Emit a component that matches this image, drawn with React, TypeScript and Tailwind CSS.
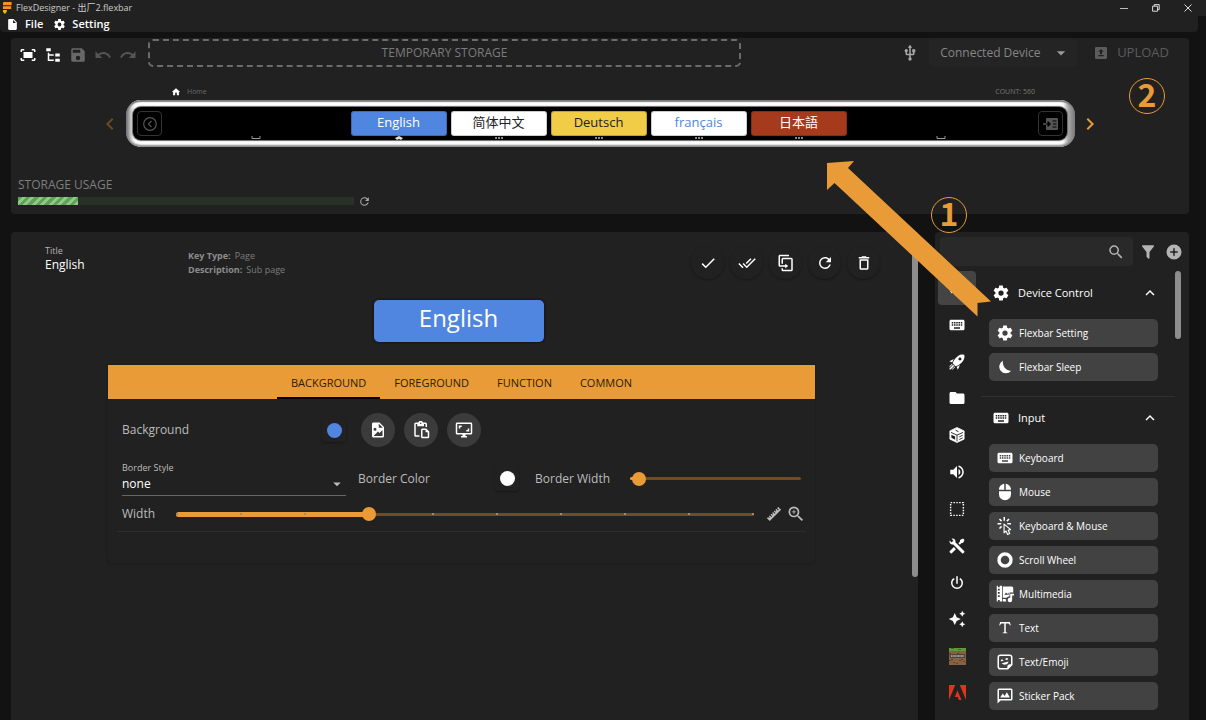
import React, { useState } from "react";

const P = {
  file: "M13,9V3.5L18.5,9M6,2C4.89,2 4,2.89 4,4V20A2,2 0 0,0 6,22H18A2,2 0 0,0 20,20V8L14,2H6Z",
  cog: "M12,15.5A3.5,3.5 0 0,1 8.5,12A3.5,3.5 0 0,1 12,8.5A3.5,3.5 0 0,1 15.5,12A3.5,3.5 0 0,1 12,15.5M19.43,12.97C19.47,12.65 19.5,12.33 19.5,12C19.5,11.67 19.47,11.34 19.43,11L21.54,9.37C21.73,9.22 21.78,8.95 21.66,8.73L19.66,5.27C19.54,5.05 19.27,4.96 19.05,5.05L16.56,6.05C16.04,5.66 15.5,5.32 14.87,5.07L14.5,2.42C14.46,2.18 14.25,2 14,2H10C9.75,2 9.54,2.18 9.5,2.42L9.13,5.07C8.5,5.32 7.96,5.66 7.44,6.05L4.95,5.05C4.73,4.96 4.46,5.05 4.34,5.27L2.34,8.73C2.21,8.95 2.27,9.22 2.46,9.37L4.57,11C4.53,11.34 4.5,11.67 4.5,12C4.5,12.33 4.53,12.65 4.57,12.97L2.46,14.63C2.27,14.78 2.21,15.05 2.34,15.27L4.34,18.73C4.46,18.95 4.73,19.03 4.95,18.95L7.44,17.94C7.96,18.34 8.5,18.68 9.13,18.93L9.5,21.58C9.54,21.82 9.75,22 10,22H14C14.25,22 14.46,21.82 14.5,21.58L14.87,18.93C15.5,18.67 16.04,18.34 16.56,17.94L19.05,18.95C19.27,19.03 19.54,18.95 19.66,18.73L21.66,15.27C21.78,15.05 21.73,14.78 21.54,14.63L19.43,12.97Z",
  fit: "M17 4H20C21.1 4 22 4.9 22 6V8H20V6H17V4M4 8V6H7V4H4C2.9 4 2 4.9 2 6V8H4M20 16V18H17V20H20C21.1 20 22 19.1 22 18V16H20M7 18H4V16H2V18C2 19.1 2.9 20 4 20H7V18M18 8H6V16H18V8Z",
  tree: "M3,3H9V7H3V3M15,10H21V14H15V10M15,17H21V21H15V17M13,13H7V18H13V20H7L5,20V9H7V11H13V13Z",
  save: "M15,9H5V5H15M12,19A3,3 0 0,1 9,16A3,3 0 0,1 12,13A3,3 0 0,1 15,16A3,3 0 0,1 12,19M17,3H5C3.89,3 3,3.9 3,5V19A2,2 0 0,0 5,21H19A2,2 0 0,0 21,19V7L17,3Z",
  undo: "M12.5,8C9.85,8 7.45,9 5.6,10.6L2,7V16H11L7.38,12.38C8.77,11.22 10.54,10.5 12.5,10.5C16.04,10.5 19.05,12.81 20.1,16L22.47,15.22C21.08,11.03 17.15,8 12.5,8Z",
  redo: "M18.4,10.6C16.55,9 14.15,8 11.5,8C6.85,8 2.92,11.03 1.54,15.22L3.9,16C4.95,12.81 7.95,10.5 11.5,10.5C13.45,10.5 15.23,11.22 16.62,12.38L13,16H22V7L18.4,10.6Z",
  usb: "M15,7V11H16V13H13V5H15L12,1L9,5H11V13H8V10.93C8.7,10.56 9.2,9.85 9.2,9C9.2,7.78 8.21,6.8 7,6.8C5.78,6.8 4.8,7.78 4.8,9C4.8,9.85 5.3,10.56 6,10.93V13A2,2 0 0,0 8,15H11V18.05C10.29,18.41 9.8,19.15 9.8,20A2.2,2.2 0 0,0 12,22.2A2.2,2.2 0 0,0 14.2,20C14.2,19.15 13.71,18.41 13,18.05V15H16A2,2 0 0,0 18,13V11H19V7H15Z",
  menuDown: "M7,10L12,15L17,10H7Z",
  upload: "M5,3H19A2,2 0 0,1 21,5V19A2,2 0 0,1 19,21H5A2,2 0 0,1 3,19V5A2,2 0 0,1 5,3M8,17H16V15H8V17M16,10L12,6L8,10H10.5V14H13.5V10H16Z",
  home: "M10,20V14H14V20H19V12H22L12,3L2,12H5V20H10Z",
  left: "M15.41,16.58L10.83,12L15.41,7.41L14,6L8,12L14,18L15.41,16.58Z",
  right: "M8.59,16.58L13.17,12L8.59,7.41L10,6L16,12L10,18L8.59,16.58Z",
  up: "M7.41,15.41L12,10.83L16.59,15.41L18,14L12,8L6,14L7.41,15.41Z",
  refresh: "M17.65,6.35C16.2,4.9 14.21,4 12,4A8,8 0 0,0 4,12A8,8 0 0,0 12,20C15.73,20 18.84,17.45 19.73,14H17.65C16.83,16.33 14.61,18 12,18A6,6 0 0,1 6,12A6,6 0 0,1 12,6C13.66,6 15.14,6.69 16.22,7.78L13,11H20V4L17.65,6.35Z",
  check: "M21,7L9,19L3.5,13.5L4.91,12.09L9,16.17L19.59,5.59L21,7Z",
  checkAll: "M0.41,13.41L6,19L7.41,17.58L1.83,12M22.24,5.58L11.66,16.17L7.5,12L6.07,13.41L11.66,19L23.66,7M18,7L16.59,5.58L10.24,11.93L11.66,13.34L18,7Z",
  duplicate: "M11,17H4A2,2 0 0,1 2,15V3A2,2 0 0,1 4,1H16V3H4V15H11V13L15,16L11,19V17M19,21V7H8V13H6V7A2,2 0 0,1 8,5H19A2,2 0 0,1 21,7V21A2,2 0 0,1 19,23H8A2,2 0 0,1 6,21V19H8V21H19Z",
  trash: "M6,19A2,2 0 0,0 8,21H16A2,2 0 0,0 18,19V7H6V19M8,9H16V19H8V9M15.5,4L14.5,3H9.5L8.5,4H5V6H19V4H15.5Z",
  fileImage: "M13,9H18.5L13,3.5V9M6,2H14L20,8V20A2,2 0 0,1 18,22H6C4.89,22 4,21.1 4,20V4C4,2.89 4.89,2 6,2M6,20H15L18,20V12L14,16L12,14L6,20M8,9A2,2 0 0,0 6,11A2,2 0 0,0 8,13A2,2 0 0,0 10,11A2,2 0 0,0 8,9Z",
  paste: "M18,2H14.82C14.4,0.84 13.3,0 12,0H11C9.7,0 8.6,0.84 8.18,2H5A2,2 0 0,0 3,4V19A2,2 0 0,0 5,21H10V19H5V4H7V7H16V4H18V8H20V4A2,2 0 0,0 18,2M11.5,2A1,1 0 0,1 12.5,3A1,1 0 0,1 11.5,4A1,1 0 0,1 10.5,3A1,1 0 0,1 11.5,2M14,10A2,2 0 0,0 12,12V21A2,2 0 0,0 14,23H21A2,2 0 0,0 23,21V14L19,10H14M14,12H18V15H21V21H14V12Z",
  monitor: "M9,6H5V10H7V8H9M19,10H17V12H15V14H19M21,16H3V4H21M21,2H3C1.89,2 1,2.89 1,4V16A2,2 0 0,0 3,18H10V20H8V22H16V20H14V18H21A2,2 0 0,0 23,16V4C23,2.89 22.1,2 21,2",
  ruler: "M1.39,18.36L3.16,16.6L4.58,18L5.64,16.95L4.22,15.54L5.64,14.12L8.11,16.6L9.17,15.54L6.7,13.06L8.11,11.65L9.53,13.06L10.59,12L9.17,10.59L10.59,9.17L13.06,11.65L14.12,10.59L11.65,8.11L13.06,6.7L14.47,8.11L15.54,7.05L14.12,5.64L15.54,4.22L18,6.7L19.07,5.64L16.6,3.16L18.36,1.39L22.61,5.64L5.64,22.61L1.39,18.36Z",
  zoom: "M15.5,14L20.5,19L19,20.5L14,15.5V14.71L13.73,14.43C12.59,15.41 11.11,16 9.5,16A6.5,6.5 0 0,1 3,9.5A6.5,6.5 0 0,1 9.5,3A6.5,6.5 0 0,1 16,9.5C16,11.11 15.41,12.59 14.43,13.73L14.71,14H15.5M9.5,14C12,14 14,12 14,9.5C14,7 12,5 9.5,5C7,5 5,7 5,9.5C5,12 7,14 9.5,14M12,10H10V12H9V10H7V9H9V7H10V9H12V10Z",
  search: "M9.5,3A6.5,6.5 0 0,1 16,9.5C16,11.11 15.41,12.59 14.44,13.73L14.71,14H15.5L20.5,19L19,20.5L14,15.5V14.71L13.73,14.44C12.59,15.41 11.11,16 9.5,16A6.5,6.5 0 0,1 3,9.5A6.5,6.5 0 0,1 9.5,3M9.5,5C7,5 5,7 5,9.5C5,12 7,14 9.5,14C12,14 14,12 14,9.5C14,7 12,5 9.5,5Z",
  filter: "M14,12V19.88C14.04,20.18 13.94,20.5 13.71,20.71C13.32,21.1 12.69,21.1 12.3,20.71L10.29,18.7C10.06,18.47 9.96,18.16 10,17.87V12H9.97L4.21,4.62C3.87,4.19 3.95,3.56 4.38,3.22C4.57,3.08 4.78,3 5,3V3H19V3C19.22,3 19.43,3.08 19.62,3.22C20.05,3.56 20.13,4.19 19.79,4.62L14.03,12H14Z",
  plus: "M17,13H13V17H11V13H7V11H11V7H13V11H17M12,2A10,10 0 0,0 2,12A10,10 0 0,0 12,22A10,10 0 0,0 22,12A10,10 0 0,0 12,2Z",
  keyboard: "M19,10H17V8H19M19,13H17V11H19M16,10H14V8H16M16,13H14V11H16M16,17H8V15H16M7,10H5V8H7M7,13H5V11H7M8,11H10V13H8M8,8H10V10H8M11,11H13V13H11M11,8H13V10H11M20,5H4C2.89,5 2,5.89 2,7V17A2,2 0 0,0 4,19H20A2,2 0 0,0 22,17V7C22,5.89 21.1,5 20,5Z",
  rocket: "M13.13 22.19L11.5 18.36C13.07 17.78 14.54 17 15.9 16.09L13.13 22.19M5.64 12.5L1.81 10.87L7.91 8.1C7 9.46 6.22 10.93 5.64 12.5M21.61 2.39C21.61 2.39 16.66 .269 11 5.93C8.81 8.12 7.5 10.53 6.65 12.64C6.37 13.39 6.56 14.21 7.11 14.77L9.24 16.89C9.79 17.45 10.61 17.63 11.36 17.35C13.5 16.53 15.88 15.19 18.07 13C23.73 7.34 21.61 2.39 21.61 2.39M14.54 9.46C13.76 8.68 13.76 7.41 14.54 6.63S16.59 5.85 17.37 6.63C18.14 7.41 18.15 8.68 17.37 9.46C16.59 10.24 15.32 10.24 14.54 9.46M8.88 16.53L7.47 15.12L8.88 16.53M6.24 22L9.88 18.36C9.54 18.27 9.21 18.12 8.91 17.91L4.83 22H6.24M2 22H3.41L8.18 17.24L6.76 15.83L2 20.59V22M2 19.17L6.09 15.09C5.88 14.79 5.73 14.47 5.64 14.12L2 17.76V19.17Z",
  folder: "M10,4H4C2.89,4 2,4.89 2,6V18A2,2 0 0,0 4,20H20A2,2 0 0,0 22,18V8C22,6.89 21.1,6 20,6H12L10,4Z",
  volume: "M14,3.23V5.29C16.89,6.15 19,8.83 19,12C19,15.17 16.89,17.84 14,18.7V20.77C18,19.86 21,16.28 21,12C21,7.72 18,4.14 14,3.23M16.5,12C16.5,10.23 15.5,8.71 14,7.97V16C15.5,15.29 16.5,13.76 16.5,12M3,9V15H7L12,20V4L7,9H3Z",
  tools: "M21.71 20.29L20.29 21.71A1 1 0 0 1 18.88 21.71L7 9.85A3.81 3.81 0 0 1 6 10A4 4 0 0 1 2.22 4.7L4.76 7.24L5.29 6.71L6.71 5.29L7.24 4.76L4.7 2.22A4 4 0 0 1 10 6A3.81 3.81 0 0 1 9.85 7L21.71 18.88A1 1 0 0 1 21.71 20.29M2.29 18.88A1 1 0 0 0 2.29 20.29L3.71 21.71A1 1 0 0 0 5.12 21.71L10.59 16.25L7.76 13.42M20 2L16 4V6L13.83 8.17L15.83 10.17L18 8H20L22 4Z",
  power: "M16.56,5.44L15.11,6.89C16.84,7.94 18,9.83 18,12A6,6 0 0,1 12,18A6,6 0 0,1 6,12C6,9.83 7.16,7.94 8.88,6.88L7.44,5.44C5.36,6.88 4,9.28 4,12A8,8 0 0,0 12,20A8,8 0 0,0 20,12C20,9.28 18.64,6.88 16.56,5.44M13,3H11V13H13",
  sparkle: "M19,1L17.74,3.75L15,5L17.74,6.26L19,9L20.25,6.26L23,5L20.25,3.75M9,4L6.5,9.5L1,12L6.5,14.5L9,20L11.5,14.5L17,12L11.5,9.5M19,15L17.74,17.74L15,19L17.74,20.25L19,23L20.25,20.25L23,19L20.25,17.74",
  mouse: "M11,1.07C7.05,1.56 4,4.92 4,9H11M4,15A8,8 0 0,0 12,23A8,8 0 0,0 20,15V11H4M13,1.07V9H20C20,4.92 16.94,1.56 13,1.07Z",
  click: "M11.5,11L17.88,16.37L17,16.55L16.36,16.67C15.73,16.8 15.37,17.5 15.65,18.07L15.92,18.65L17.28,21.59L15.86,22.25L14.5,19.32L14.24,18.74C13.97,18.15 13.22,17.97 12.72,18.38L12.21,18.78L11.5,19.35V11M10.76,8.69A0.76,0.76 0 0,0 10,9.45V20.9C10,21.32 10.34,21.66 10.76,21.66C10.95,21.66 11.11,21.6 11.24,21.5L13.15,19.95L14.81,23.57C14.94,23.84 15.21,24 15.5,24C15.61,24 15.72,24 15.83,23.92L18.59,22.64C18.97,22.46 19.15,22 18.95,21.63L17.28,18L19.69,17.55C19.85,17.5 20,17.43 20.12,17.29C20.39,16.97 20.35,16.5 20,16.21L11.26,8.86L11.25,8.87C11.12,8.76 10.95,8.69 10.76,8.69M15,10V8H20V10H15M13.83,4.76L16.66,1.93L18.07,3.34L15.24,6.17L13.83,4.76M10,0H12V5H10V0M3.93,14.66L6.76,11.83L8.17,13.24L5.34,16.07L3.93,14.66M3.93,3.34L5.34,1.93L8.17,4.76L6.76,6.17L3.93,3.34M7,10H2V8H7V10",
  text: "M18.5,4L19.66,8.35L18.7,8.61C18.25,7.74 17.79,6.87 17.26,6.43C16.73,6 16.11,6 15.5,6H13V16.5C13,17 13,17.5 13.33,17.75C13.67,18 14.33,18 15,18V19H9V18C9.67,18 10.33,18 10.67,17.75C11,17.5 11,17 11,16.5V6H8.5C7.89,6 7.27,6 6.74,6.43C6.21,6.87 5.75,7.74 5.3,8.61L4.34,8.35L5.5,4H18.5Z",
  emoji: "M5.5,2C3.56,2 2,3.56 2,5.5V18.5C2,20.44 3.56,22 5.5,22H16L22,16V5.5C22,3.56 20.44,2 18.5,2H5.5M5.75,4H18.25A1.75,1.75 0 0,1 20,5.75V15H18.5C16.56,15 15,16.56 15,18.5V20H5.75A1.75,1.75 0 0,1 4,18.25V5.75A1.75,1.75 0 0,1 5.75,4M14.44,6.77C14.28,6.77 14.12,6.79 13.97,6.83C13.03,7.09 12.5,8.05 12.74,9C12.79,9.15 12.86,9.3 12.95,9.44L16.18,8.56C16.18,8.39 16.16,8.22 16.12,8.05C15.91,7.3 15.22,6.77 14.44,6.77M8.17,8.5C8,8.5 7.85,8.5 7.7,8.55C6.77,8.81 6.22,9.77 6.47,10.7C6.5,10.86 6.59,11 6.68,11.16L9.91,10.28C9.91,10.11 9.89,9.94 9.85,9.78C9.64,9 8.95,8.5 8.17,8.5M16.72,11.26L7.59,13.77C8.91,15.3 11,15.94 12.95,15.41C14.9,14.87 16.36,13.25 16.72,11.26Z",
  sticker: "M20,2H4A2,2 0 0,0 2,4V22L6,18H20A2,2 0 0,0 22,16V4A2,2 0 0,0 20,2M20,16H4V4H20V16M5.5,14L9,8.5L11.5,12L14.5,7L18.5,14H5.5Z",
  moon: "M9 2.500A10 10 0 1 0 21 18A13 13 0 0 1 9 2.500Z",
};

function Icon({ d, className = "size-[18px]" }: { d: string; className?: string }) {
  return (
    <svg viewBox="0 0 24 24" fill="currentColor" aria-hidden="true" className={`shrink-0 ${className}`}>
      <path d={d} />
    </svg>
  );
}

function CubeIcon() {
  return (
    <svg viewBox="0 0 24 24" aria-hidden="true" className="size-[18px]">
      <path d="M12 2 21.500 6.500V17.500L12 22 2.500 17.500V6.500Z" fill="#fff" stroke="#fff" strokeLinejoin="round" />
      <path d="M4 8.500 12 12.200 20 8.500M12 12.200V20.500" stroke="#212121" strokeWidth="1.200" fill="none" />
      <path d="M10 5.500 14 7.700" stroke="#212121" strokeWidth="1.200" />
      <path d="M4.500 11.500 9.500 14V18.200L4.500 15.800Z" fill="#212121" />
      <path d="M15 14.500 19.500 12.300M15 18 19.500 15.800" stroke="#212121" strokeWidth="1.200" />
    </svg>
  );
}

function SelectionIcon() {
  return (
    <svg viewBox="0 0 24 24" aria-hidden="true" className="size-[18px]">
      <rect x="3.5" y="3.5" width="17" height="17" fill="none" stroke="#fff" strokeWidth="1.9" strokeDasharray="2 1.78" />
    </svg>
  );
}

function WheelIcon() {
  return (
    <svg viewBox="0 0 24 24" aria-hidden="true" className="size-[18px] shrink-0">
      <circle cx="12" cy="12" r="8" fill="none" stroke="#fff" strokeWidth="4.6" />
      <circle cx="12" cy="12" r="10.6" fill="none" stroke="#424242" strokeWidth="0.8" strokeDasharray="1 7.3" />
    </svg>
  );
}

function MediaIcon() {
  return (
    <svg viewBox="0 0 24 24" aria-hidden="true" className="size-[18px] shrink-0">
      <path fill="#fff" d="M1 1h1.500v2H5V1h3v21H5v-2H2.500v2H1zM9 2H21a2 2 0 0 1 2 2v6h-5v5a5 5 0 0 0-4 2H9zM9 18.500h4a5 5 0 0 0 1 3.500H9z" />
      <path fill="#424242" d="M2.500 5H5v2.300H2.500zM2.500 9.300H5v2.300H2.500zM2.500 13.600H5V16H2.500zM11 13l2.500-3 2 2 1.500-2v3z" />
      <path fill="#fff" d="M19 11.500h5v2.500h-2.500v6a3 3 0 1 1-2.500-3z" />
    </svg>
  );
}

function BlockIcon() {
  const soil = [
    [0, 5], [4, 6], [8, 5], [13, 6], [2, 11], [10, 12], [14, 13], [4, 14], [7, 15], [0, 12], [12, 11],
  ];
  return (
    <svg viewBox="0 0 17 17" aria-hidden="true" className="size-[17px]">
      <rect width="17" height="17" fill="#8a6042" />
      <rect width="17" height="3" fill="#5e9a38" />
      <path d="M0 3h3v1h2v-1h4v2h2v-2h3v1h3v-1z" fill="#4a7b2c" />
      <path d="M2 0h3v1h-3zM9 1h3v1h-3z" fill="#3f6b27" />
      {soil.map(([x, y]) => (
        <rect key={`${x}-${y}`} x={x} y={y} width="2" height="1" fill="#5f402b" />
      ))}
      <rect x="1" y="6" width="15" height="4" fill="#4b4542" />
      <path d="M2 8h13" stroke="#a19d9a" strokeWidth="2" strokeDasharray="1 .4" />
    </svg>
  );
}

function AdobeIcon() {
  return (
    <svg viewBox="0 0 17 15" aria-hidden="true" className="h-[15px] w-[17px]">
      <path fill="#e2341d" d="M0 0h6.200L0 15zM10.800 0H17v15zM8.500 5.400 12.500 15H9.900l-1.200-3H5.800z" />
    </svg>
  );
}

function Logo() {
  return (
    <svg viewBox="0 0 9 12" aria-hidden="true" className="h-3 w-[9px]">
      <path fill="#f7931e" d="M.8 0H8.600V3.200H0V.8zM0 4.200H8.200V7H0z" />
      <path fill="#ffb400" d="M0 8h3.800V9.500L2 12 0 10z" />
    </svg>
  );
}

function MoveInIcon() {
  return (
    <svg viewBox="0 0 16 14" aria-hidden="true" className="h-3.5 w-4">
      <rect x="3" y="1" width="12" height="12" rx="1" fill="#555" />
      <path d="M0 7H3" stroke="#555" strokeWidth="1.500" />
      <path d="M3 7H6M5 4.500 7.500 7 5 9.500Z" fill="#000" stroke="#000" strokeWidth="1" />
      <path stroke="#000" strokeWidth="1.200" d="M9.500 4h4M10 7h3.500M9.500 10h4" />
    </svg>
  );
}

const deviceKeys = [
  { label: "English", style: "bg-[#5086e0] text-white" },
  { label: "简体中文", style: "bg-white text-[#222]" },
  { label: "Deutsch", style: "bg-[#f1cc46] text-[#222]" },
  { label: "français", style: "bg-white text-[#5086e0]" },
  { label: "日本語", style: "bg-[#a63a1c] text-white" },
];

function SlotMark() {
  return (
    <svg viewBox="0 0 10 4" aria-hidden="true" className="h-1 w-2.5">
      <path d="M1 0V2.500H9V0" fill="none" stroke="#9a9a9a" />
    </svg>
  );
}

function KeyMark({ active }: { active: boolean }) {
  return (
    <svg viewBox="0 0 10 4" aria-hidden="true" className="h-1 w-2.5">
      {active ? (
        <path d="M5 0 9 2 7 4 5 3 3 4 1 2Z" fill="#ddd" />
      ) : (
        <path d="M1 1h2v2h-2zM4 1h2v2h-2zM7 1h2v2h-2z" fill="#888" />
      )}
    </svg>
  );
}

function DeviceBar() {
  const square = "flex size-[25px] shrink-0 items-center justify-center rounded border border-[#333] mt-1";
  return (
    <div className="mt-0.5 flex items-center px-[91px]">
      <button aria-label="Previous" className="w-[24px] text-[#6b4a22]">
        <Icon d={P.left} className="size-6 -ml-1" />
      </button>
      <div className="h-[47px] min-w-0 flex-1 rounded-[15px] bg-[linear-gradient(to_right,#6a6a6a,#ddd_6px,#fff_9px,#fff_calc(100%-12px),#aaa_calc(100%-7px),#777)] p-[7px] pr-2 shadow-[inset_0_2px_1px_#808080,inset_0_-2px_2px_#888]">
        <div className="flex h-full items-start justify-between gap-1 rounded-lg bg-black px-1 shadow-[0_0_1px_1px_#666]">
          <button aria-label="Back" className={square}>
            <svg viewBox="0 0 14 14" aria-hidden="true" className="size-3.5">
              <circle cx="7" cy="7" r="6.300" fill="none" stroke="#555" strokeWidth="1.200" />
              <path d="M8.500 4 5.500 7l3 3" fill="none" stroke="#555" strokeWidth="1.200" />
            </svg>
          </button>
          <div className="flex h-full flex-1 items-end justify-center">
            <SlotMark />
          </div>
          {deviceKeys.map((k, i) => (
            <div key={k.label} className="flex h-full w-24 flex-col items-center justify-between pt-1">
              <button className={`flex h-[25px] w-full items-center justify-center rounded-[3px] border border-black/20 pb-1 text-[13px] leading-5 ${k.style}`}>
                {k.label}
              </button>
              <KeyMark active={i === 0} />
            </div>
          ))}
          <div className="mr-[3px] flex h-full flex-1 items-end justify-center">
            <SlotMark />
          </div>
          <button aria-label="Move in" className={square}>
            <MoveInIcon />
          </button>
        </div>
      </div>
      <button aria-label="Next" className="flex w-[23px] justify-end text-[#e99b38]">
        <Icon d={P.right} className="size-6 -mr-1" />
      </button>
    </div>
  );
}

function TopPanel() {
  return (
    <section className="shrink-0 rounded bg-[#212121] pb-[7px]">
      <div className="flex h-[30px] items-center pl-2 pr-5">
        <div className="mt-1 flex gap-[7px]">
          <button aria-label="Fit to screen"><Icon d={P.fit} /></button>
          <button aria-label="Tree"><Icon d={P.tree} /></button>
          <button aria-label="Save" className="text-[#686868]"><Icon d={P.save} /></button>
          <button aria-label="Undo" className="text-[#555]"><Icon d={P.undo} /></button>
          <button aria-label="Redo" className="text-[#555]"><Icon d={P.redo} /></button>
        </div>
        <div className="ml-[11px] flex h-7 w-[593px] items-center justify-center rounded-[5px] border-2 border-dashed border-[#6b6b6b] text-xs text-[#7b7b7b]">
          TEMPORARY STORAGE
        </div>
        <div className="ml-auto flex shrink-0 items-center">
          <Icon d={P.usb} className="size-[18px] text-[#a8a8a8]" />
          <div className="relative ml-2.5 flex items-center">
            <select aria-label="Connected Device" className="h-7 w-[148px] appearance-none rounded bg-[#242424] pl-[11px] text-xs text-[#868686]">
              <option>Connected Device</option>
            </select>
            <Icon d={P.menuDown} className="pointer-events-none absolute right-1.5 size-5 text-[#9a9a9a]" />
          </div>
          <button className="ml-4 flex items-center gap-2 text-[13px] text-[#5c5c5c]">
            <Icon d={P.upload} className="size-4" />
            UPLOAD
          </button>
        </div>
      </div>
      <div className="mt-[18px] flex h-3 items-center justify-between pl-40 pr-[154px] text-[7px]">
        <span className="flex items-center gap-1.5 text-[#6a6a6a]">
          <Icon d={P.home} className="size-2.5 text-white" />
          Home
        </span>
        <span className="text-[#777]">COUNT: 560</span>
      </div>
      <DeviceBar />
      <div className="mt-7 px-[7px]">
        <div id="usage" className="text-xs leading-5 text-[#7f7f7f]">STORAGE USAGE</div>
        <div className="flex h-3 items-center gap-1 text-[#aaa]">
          <div role="progressbar" aria-labelledby="usage" aria-valuenow={18} className="h-2 w-[336px] bg-[#293028]">
            <div className="h-full w-[18%] bg-[repeating-linear-gradient(135deg,#5fa356_0_3px,#93c58c_3px_6px)]" />
          </div>
          <button aria-label="Refresh usage"><Icon d={P.refresh} className="size-[13px]" /></button>
        </div>
      </div>
    </section>
  );
}

function Slider({ label, value, ticks }: { label: string; value: number; ticks?: boolean }) {
  const [v, setV] = useState(value);
  const marks = Array.from({ length: 10 }, (_, i) => i);
  return (
    <div className="relative flex h-4 flex-1 items-center">
      <div className="flex h-[3px] w-full items-stretch rounded-full bg-[#6f4d26]">
        <div
          className={ticks ? "-my-px rounded-full bg-[#e99b38]" : "rounded-full bg-[#e99b38]"}
          style={{ width: `${v}%` }}
        />
      </div>
      {ticks && (
        <div className="absolute inset-x-0 flex justify-between">
          {marks.map((m) => (
            <span key={m} className="size-0.5 bg-[#a08a6c]" />
          ))}
        </div>
      )}
      <input
        type="range"
        aria-label={label}
        min={0}
        max={100}
        step="any"
        value={v}
        onChange={(e) => setV(Number(e.target.value))}
        className="absolute -left-[7px] h-4 w-[calc(100%+14px)] appearance-none bg-transparent [&::-webkit-slider-thumb]:size-3.5 [&::-webkit-slider-thumb]:appearance-none [&::-webkit-slider-thumb]:rounded-full [&::-webkit-slider-thumb]:bg-[#e99b38]"
      />
    </div>
  );
}

function Swatch({ label, color }: { label: string; color: string }) {
  return (
    <button aria-label={label} className="flex size-6 items-center justify-center rounded shadow-[0_1px_2px_#181818]">
      <span className={`size-[15px] rounded-full ${color}`} />
    </button>
  );
}

const tabs = ["BACKGROUND", "FOREGROUND", "FUNCTION", "COMMON"];

function Editor() {
  const [tab, setTab] = useState(0);
  const actions: [string, string][] = [
    ["Apply", P.check],
    ["Apply to all", P.checkAll],
    ["Duplicate", P.duplicate],
    ["Reload", P.refresh],
    ["Delete", P.trash],
  ];
  const sources: [string, string][] = [
    ["Image file", P.fileImage],
    ["Paste", P.paste],
    ["Screenshot", P.monitor],
  ];
  return (
    <section className="flex min-w-0 flex-1 rounded-t bg-[#212121]">
      <div className="min-w-0 flex-1">
        <div className="flex h-[68px] items-start pl-[34px] pr-8 pt-3">
          <div className="flex w-[143px] flex-col">
            <label htmlFor="title" className="text-[9px] leading-[14px] text-[#b5b5b5]">Title</label>
            <input id="title" defaultValue="English" className="h-3.5 w-full bg-transparent text-xs text-white outline-none" />
          </div>
          <dl className="pt-[5px] text-[9px] leading-[14px] text-[#7d7d7d]">
            <div className="flex gap-1"><dt className="font-bold text-[#8c8c8c]">Key Type:</dt><dd>Page</dd></div>
            <div className="flex gap-1"><dt className="font-bold text-[#8c8c8c]">Description:</dt><dd>Sub page</dd></div>
          </dl>
          <div className="ml-auto flex gap-1.5 pt-0.5">
            {actions.map(([name, d]) => (
              <button key={name} aria-label={name} className="flex size-[33px] items-center justify-center rounded-full shadow-[0_1px_2px_#181818]">
                <Icon d={d} />
              </button>
            ))}
          </div>
        </div>
        <div className="flex justify-center pr-1.5">
          <div className="h-[42px] w-[170px] rounded-[5px] bg-[#5086e0] text-center text-2xl leading-9 shadow-[0_0_2px_1px_#161616]">
            English
          </div>
        </div>
        <div className="mx-[97px] mt-[23px] rounded-b shadow-[0_0_2px_#161616]">
          <div role="tablist" className="flex h-[34px] justify-center bg-[#e99b38]">
            {tabs.map((t, i) => (
              <button
                key={t}
                role="tab"
                aria-selected={i === tab}
                onClick={() => setTab(i)}
                className={`border-b-2 px-3.5 pt-1 text-[11px] text-[#2a1c0a] ${i === tab ? "border-black" : "border-transparent"}`}
              >
                {t}
              </button>
            ))}
          </div>
          <div className="px-[9px] pb-[31px] pt-3.5 text-xs text-[#bcbcbc]">
            <div className="flex items-center px-[5px]">
              <span className="w-[200px]">Background</span>
              <Swatch label="Background color" color="bg-[#5086e0]" />
              <div className="ml-[15px] flex gap-[9px]">
                {sources.map(([name, d]) => (
                  <button key={name} aria-label={name} className="flex size-[34px] items-center justify-center rounded-full bg-[#3b3b3b] text-white">
                    <Icon d={d} />
                  </button>
                ))}
              </div>
            </div>
            <div className="mt-3.5 flex items-center gap-3 px-[5px]">
              <div className="relative flex w-[224px] flex-col border-b border-[#666]">
                <label htmlFor="border-style" className="text-[9px] leading-[14px]">Border Style</label>
                <select id="border-style" className="h-5 appearance-none bg-transparent pb-0.5 text-xs text-white">
                  <option>none</option>
                </select>
                <Icon d={P.menuDown} className="pointer-events-none absolute bottom-0.5 right-0 size-[18px]" />
              </div>
              <span className="w-[125px]">Border Color</span>
              <Swatch label="Border color" color="bg-white" />
              <span className="ml-1 w-[83px]">Border Width</span>
              <Slider label="Border Width" value={5} />
            </div>
            <div className="mt-1.5 flex items-center border-b border-[#2d2d2d] pb-[5px] pl-[5px]">
              <span className="w-[54px] leading-6">Width</span>
              <Slider label="Width" value={33.333} ticks />
              <button aria-label="Measure" className="ml-3"><Icon d={P.ruler} className="size-4" /></button>
              <button aria-label="Zoom" className="ml-1"><Icon d={P.zoom} className="size-5" /></button>
            </div>
          </div>
        </div>
      </div>
      <div className="h-[345px] w-1.5 shrink-0 rounded-full bg-[#8d8d8d]" />
    </section>
  );
}

const groups: { name: string; icon: string; items: { label: string; icon: React.ReactNode }[] }[] = [
  {
    name: "Device Control",
    icon: P.cog,
    items: [
      { label: "Flexbar Setting", icon: <Icon d={P.cog} /> },
      { label: "Flexbar Sleep", icon: <Icon d={P.moon} className="size-4" /> },
    ],
  },
  {
    name: "Input",
    icon: P.keyboard,
    items: [
      { label: "Keyboard", icon: <Icon d={P.keyboard} /> },
      { label: "Mouse", icon: <Icon d={P.mouse} /> },
      { label: "Keyboard & Mouse", icon: <Icon d={P.click} /> },
      { label: "Scroll Wheel", icon: <WheelIcon /> },
      { label: "Multimedia", icon: <MediaIcon /> },
      { label: "Text", icon: <Icon d={P.text} /> },
      { label: "Text/Emoji", icon: <Icon d={P.emoji} /> },
      { label: "Sticker Pack", icon: <Icon d={P.sticker} /> },
    ],
  },
];

const rail: [string, React.ReactNode][] = [
  ["Device Control", <Icon d={P.cog} />],
  ["Input", <Icon d={P.keyboard} />],
  ["Launch", <Icon d={P.rocket} />],
  ["Files", <Icon d={P.folder} />],
  ["3D", <CubeIcon />],
  ["Audio", <Icon d={P.volume} />],
  ["Selection", <SelectionIcon />],
  ["Tools", <Icon d={P.tools} />],
  ["Power", <Icon d={P.power} />],
  ["Effects", <Icon d={P.sparkle} />],
  ["Blocks", <BlockIcon />],
  ["Adobe", <AdobeIcon />],
];

function Library() {
  return (
    <aside className="flex w-[254px] shrink-0 flex-col overflow-hidden rounded-t bg-[#212121]">
      <div className="flex shrink-0 items-center pl-[5px] pr-1.5 pt-[5px] text-[#b3b3b3]">
        <label className="flex h-[29px] min-w-0 flex-1 items-center rounded bg-[#292929] pr-2">
          <input aria-label="Search" className="min-w-0 flex-1 bg-transparent px-2 text-xs outline-none" />
          <Icon d={P.search} />
        </label>
        <button aria-label="Filter" className="ml-1.5"><Icon d={P.filter} /></button>
        <button aria-label="Add" className="ml-2"><Icon d={P.plus} /></button>
      </div>
      <div className="flex min-h-0 flex-1 pt-[5px]">
        <nav className="flex w-[43px] flex-col justify-between px-[3px] pb-2.5">
          {rail.map(([name, icon], i) => (
            <button
              key={name}
              aria-label={name}
              className={`flex h-[34px] w-[38px] shrink-0 items-center justify-center rounded-sm ${i === 0 ? "bg-[#444]" : ""}`}
            >
              {icon}
            </button>
          ))}
        </nav>
        <div className="min-w-0 flex-1 pl-[3px] pt-px">
          {groups.map((g, i) => (
            <div key={g.name} className={i > 0 ? "border-t border-[#303030]" : ""}>
              <button className="flex h-[42px] w-full items-center gap-2 pl-[11px] pr-4 text-left text-[11px]">
                <Icon d={g.icon} />
                <span className="flex-1">{g.name}</span>
                <Icon d={P.up} className="size-[18px]" />
              </button>
              <ul className="flex flex-col gap-1.5 pb-[15px] pl-2 pr-[17px] pt-[5px]">
                {g.items.map((it) => (
                  <li key={it.label}>
                    <button className="flex h-7 w-full items-center gap-[5px] rounded-[5px] bg-[#424242] pl-[7px] text-[10px]">
                      <span className="flex w-[18px] justify-center">{it.icon}</span>
                      {it.label}
                    </button>
                  </li>
                ))}
              </ul>
            </div>
          ))}
        </div>
        <div className="mr-2 h-[68px] w-1.5 rounded-full bg-[#8d8d8d]" />
      </div>
    </aside>
  );
}

function Callout({ n, className }: { n: string; className: string }) {
  return (
    <div className={`pointer-events-none absolute flex size-9 items-center justify-center rounded-full border border-[#e99b38] pb-1.5 font-['Noto_Sans_CJK_SC',sans-serif] text-[32px] font-bold leading-none text-[#e99b38] ${className}`}>
      {n}
    </div>
  );
}

export default function App() {
  return (
    <div className="relative flex h-screen flex-col overflow-hidden bg-[#121212] font-['Open_Sans','Noto_Sans_CJK_SC',sans-serif] text-white">
      <header className="flex h-4 shrink-0 items-center bg-[#212121] pl-[3px] text-[9px] text-[#ccc]">
        <Logo />
        <span className="ml-1 flex-1">FlexDesigner - 出厂2.flexbar</span>
        <div className="flex gap-5 pr-3">
          <button aria-label="Minimize" className="flex w-3 items-center justify-center"><span className="h-px w-2 bg-[#bbb]" /></button>
          <button aria-label="Restore" className="flex w-3 justify-center">
            <svg viewBox="0 0 8 8" className="size-2" aria-hidden="true">
              <path d="M.6 2.200h5v5h-5zM2.200 2V.6h5v5H5.800" fill="none" stroke="#ddd" />
            </svg>
          </button>
          <button aria-label="Close" className="flex w-3 justify-center">
            <svg viewBox="0 0 8 8" className="size-2" aria-hidden="true">
              <path d="M.5.5l7 7M7.500.5l-7 7" stroke="#ddd" />
            </svg>
          </button>
        </div>
      </header>
      <nav className="mr-2 flex h-4 shrink-0 items-center rounded-b bg-[#212121] pl-1.5 text-[11px] font-semibold">
        <button className="flex items-center gap-1.5"><Icon d={P.file} className="size-[13px]" />File</button>
        <button className="ml-2.5 flex items-center gap-1.5"><Icon d={P.cog} className="size-[13px]" />Setting</button>
      </nav>
      <main className="flex min-h-0 flex-1 flex-col gap-[18px] pl-[11px] pr-[17px] pt-1.5">
        <TopPanel />
        <div className="flex min-h-0 flex-1 gap-[17px]">
          <Editor />
          <Library />
        </div>
      </main>
      <svg viewBox="0 0 164 156" aria-hidden="true" className="pointer-events-none absolute left-[827px] top-[161px] h-[156px] w-[164px]">
        <path d="M0 2 27 0 21 7 164 140.500 150.500 142 150.500 155.500 7.500 22 0 29Z" fill="#e99b38" />
      </svg>
      <Callout n="1" className="left-[931px] top-[197px]" />
      <Callout n="2" className="left-[1129px] top-[78px]" />
    </div>
  );
}
